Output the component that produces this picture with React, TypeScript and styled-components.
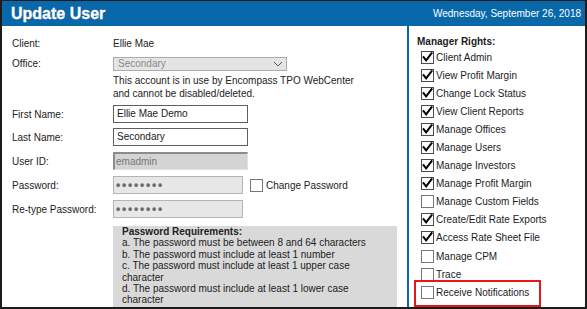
import React from "react";
import styled, { createGlobalStyle } from "styled-components";

const Global = createGlobalStyle`
  html, body { margin: 0; padding: 0; background: #fff; }
  body { font-family: "Liberation Sans", Arial, sans-serif; }
  * { box-sizing: border-box; }
`;

const Frame = styled.div`
  width: 587px;
  height: 309px;
  border: 2px solid #1c1c1c;
  border-top-width: 1px;
  display: flex;
  flex-direction: column;
  overflow: hidden;
  background: #fff;
`;

const Header = styled.header`
  height: 25px;
  flex: none;
  background: #0868aa;
  color: #fff;
  display: flex;
  align-items: center;
  justify-content: space-between;
  padding: 0 4px 0 9px;
`;

const Title = styled.h1`
  margin: 0;
  font-size: 16px;
  font-weight: bold;
  line-height: 1;
  -webkit-text-stroke: 0.4px #fff;
  text-shadow: 0 0 1px rgba(0, 20, 60, 0.7);
`;

const DateText = styled.span`
  font-size: 10px;
  line-height: 1;
`;

const Body = styled.div`
  flex: 1;
  min-height: 0;
  display: flex;
  overflow: hidden;
`;

const LeftPanel = styled.section`
  width: 405px;
  flex: none;
  padding: 9px 0 0 10px;
  font-size: 10px;
  color: #222;
`;

const Row = styled.div<{ $mt: number; $h: number }>`
  display: flex;
  align-items: center;
  margin-top: ${(p) => p.$mt}px;
  height: ${(p) => p.$h}px;
`;

const Label = styled.span`
  width: 101px;
  flex: none;
`;

const Value = styled.span``;

const Select = styled.div`
  width: 174px;
  height: 14px;
  background: #e5e5e5;
  border: 1px solid #ababab;
  color: #8a8a8a;
  display: flex;
  align-items: center;
  justify-content: space-between;
  padding: 0 3px 0 4px;
  line-height: 1;
`;

const Info = styled.div`
  margin: 4px 0 0 101px;
  line-height: 12.5px;
`;

const TextBox = styled.div<{ $w: number; $variant: "normal" | "disabled" | "password" }>`
  width: ${(p) => p.$w}px;
  height: 18px;
  display: flex;
  align-items: center;
  line-height: 1;
  ${(p) =>
    p.$variant === "normal"
      ? `background:#fff; border:1px solid #5e5e5e; padding-left:3px; color:#1a1a1a;`
      : p.$variant === "disabled"
      ? `background:#d4d4d4; border-style:solid; border-width:2px 1px 1px 2px; border-color:#8c8c8c #e2e2e2 #e2e2e2 #8c8c8c; padding-left:1px; color:#777;`
      : `background:#e7e7e7; border:1px solid #b5b5b5; padding-left:2px; color:#6a6a6a;`}
`;

const Dots = styled.span`
  font-size: 12px;
  letter-spacing: 1.8px;
  font-weight: bold;
`;

const Box = styled.span<{ $checked?: boolean }>`
  width: 13px;
  height: 13px;
  flex: none;
  background: #fff;
  border: 1px solid ${(p) => (p.$checked ? "#4a4a4a" : "#777")};
  display: inline-flex;
  align-items: center;
  justify-content: center;
  position: relative;
  svg {
    position: absolute;
    left: -1px;
    top: -1px;
    overflow: visible;
  }
`;

const ChangePw = styled.label`
  display: flex;
  align-items: center;
  gap: 3px;
  margin-left: 7px;
`;

const Requirements = styled.div`
  margin: 8px 0 0 101px;
  width: 284px;
  height: 100px;
  background: #d9d9d9;
  padding: 0 9px;
  line-height: 11.4px;
  color: #222;
`;

const ReqTitle = styled.div`
  font-weight: bold;
`;

const RightPanel = styled.section`
  flex: 1;
  border-left: 2px solid #0868aa;
  padding: 9px 0 0 8px;
  font-size: 10px;
  color: #1c1c28;
`;

const RightsTitle = styled.div`
  font-weight: bold;
  line-height: 14px;
  height: 14px;
`;

const RightsList = styled.ul`
  list-style: none;
  margin: -1px 0 0;
  padding: 0 0 0 4px;
`;

const RightItem = styled.li<{ $highlight?: boolean }>`
  height: 18.1px;
  display: flex;
  align-items: center;
  gap: 2px;
  position: relative;
  width: max-content;
  ${(p) =>
    p.$highlight
      ? `&::after {
          content: "";
          position: absolute;
          left: -7px;
          top: -3.3px;
          width: 123px;
          height: 23px;
          border: 2px solid #e8151b;
        }`
      : ""}
`;

const CheckBox = ({ checked }: { checked?: boolean }) => (
  <Box $checked={checked}>
    {checked && (
      <svg width="13" height="13" viewBox="0 0 13 13">
        <path d="M2.6 6.2 L5.1 9.3 L10.6 2.2" fill="none" stroke="#000" strokeWidth="2" strokeLinecap="square" />
      </svg>
    )}
  </Box>
);

const Chevron = () => (
  <svg width="10" height="6" viewBox="0 0 10 6">
    <path d="M1 1 L5 5 L9 1" fill="none" stroke="#555" strokeWidth="1" />
  </svg>
);

const rights: { label: string; checked: boolean; highlight?: boolean }[] = [
  { label: "Client Admin", checked: true },
  { label: "View Profit Margin", checked: true },
  { label: "Change Lock Status", checked: true },
  { label: "View Client Reports", checked: true },
  { label: "Manage Offices", checked: true },
  { label: "Manage Users", checked: true },
  { label: "Manage Investors", checked: true },
  { label: "Manage Profit Margin", checked: true },
  { label: "Manage Custom Fields", checked: false },
  { label: "Create/Edit Rate Exports", checked: true },
  { label: "Access Rate Sheet File", checked: true },
  { label: "Manage CPM", checked: false },
  { label: "Trace", checked: false },
  { label: "Receive Notifications", checked: false, highlight: true },
];

export default function App() {
  return (
    <>
      <Global />
      <Frame>
        <Header>
          <Title>Update User</Title>
          <DateText>Wednesday, September 26, 2018</DateText>
        </Header>
        <Body>
          <LeftPanel>
            <Row $mt={0} $h={16}>
              <Label>Client:</Label>
              <Value>Ellie Mae</Value>
            </Row>
            <Row $mt={5} $h={15}>
              <Label>Office:</Label>
              <Select>
                <span>Secondary</span>
                <Chevron />
              </Select>
            </Row>
            <Info>
              This account is in use by Encompass TPO WebCenter
              <br />
              and cannot be disabled/deleted.
            </Info>
            <Row $mt={5} $h={18}>
              <Label>First Name:</Label>
              <TextBox $w={135} $variant="normal">Ellie Mae Demo</TextBox>
            </Row>
            <Row $mt={5} $h={18}>
              <Label>Last Name:</Label>
              <TextBox $w={135} $variant="normal">Secondary</TextBox>
            </Row>
            <Row $mt={6} $h={18}>
              <Label>User ID:</Label>
              <TextBox $w={135} $variant="disabled">emadmin</TextBox>
            </Row>
            <Row $mt={6} $h={18}>
              <Label>Password:</Label>
              <TextBox $w={130} $variant="password">
                <Dots>••••••••</Dots>
              </TextBox>
              <ChangePw>
                <CheckBox />
                Change Password
              </ChangePw>
            </Row>
            <Row $mt={6} $h={18}>
              <Label>Re-type Password:</Label>
              <TextBox $w={130} $variant="password">
                <Dots>••••••••</Dots>
              </TextBox>
            </Row>
            <Requirements>
              <ReqTitle>Password Requirements:</ReqTitle>
              <div>a. The password must be between 8 and 64 characters</div>
              <div>b. The password must include at least 1 number</div>
              <div>c. The password must include at least 1 upper case character</div>
              <div>d. The password must include at least 1 lower case character</div>
            </Requirements>
          </LeftPanel>
          <RightPanel>
            <RightsTitle>Manager Rights:</RightsTitle>
            <RightsList>
              {rights.map((r) => (
                <RightItem key={r.label} $highlight={r.highlight}>
                  <CheckBox checked={r.checked} />
                  {r.label}
                </RightItem>
              ))}
            </RightsList>
          </RightPanel>
        </Body>
      </Frame>
    </>
  );
}
